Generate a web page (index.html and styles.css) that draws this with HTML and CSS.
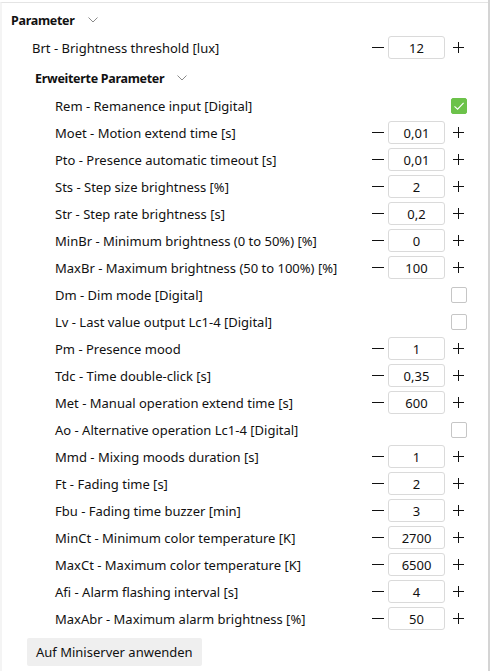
FILE: index.html
```html
<!DOCTYPE html>
<html>
<head>
<meta charset="utf-8">
<link rel="stylesheet" href="styles.css">
</head>
<body>
<div class="frame">
  <div class="panel">
    <div class="section-head top">
      <span class="title">Parameter</span>
      <svg class="chev" width="10" height="6" viewBox="0 0 10 6"><path d="M0.5 0.5 L5 5 L9.5 0.5" fill="none" stroke="#8a8a8a" stroke-width="1"/></svg>
    </div>
    <div class="row lvl1">
      <span class="label">Brt - Brightness threshold [lux]</span>
      <div class="stepper"><span class="minus"></span><span class="box">12</span><span class="plus"></span></div>
    </div>
    <div class="section-head sub">
      <span class="title">Erweiterte Parameter</span>
      <svg class="chev" width="10" height="6" viewBox="0 0 10 6"><path d="M0.5 0.5 L5 5 L9.5 0.5" fill="none" stroke="#8a8a8a" stroke-width="1"/></svg>
    </div>
    <div class="row lvl2">
      <span class="label">Rem - Remanence input [Digital]</span>
      <div class="ctrl"><span class="check on"><svg width="16" height="16" viewBox="0 0 16 16"><path d="M3.5 8.3 L6.6 11.2 L12.6 4.8" fill="none" stroke="#fff" stroke-width="1.1"/></svg></span></div>
    </div>
    <div class="row lvl2"><span class="label">Moet - Motion extend time [s]</span><div class="stepper"><span class="minus"></span><span class="box">0,01</span><span class="plus"></span></div></div>
    <div class="row lvl2"><span class="label">Pto - Presence automatic timeout [s]</span><div class="stepper"><span class="minus"></span><span class="box">0,01</span><span class="plus"></span></div></div>
    <div class="row lvl2"><span class="label">Sts - Step size brightness [%]</span><div class="stepper"><span class="minus"></span><span class="box">2</span><span class="plus"></span></div></div>
    <div class="row lvl2"><span class="label">Str - Step rate brightness [s]</span><div class="stepper"><span class="minus"></span><span class="box">0,2</span><span class="plus"></span></div></div>
    <div class="row lvl2"><span class="label">MinBr - Minimum brightness (0 to 50%) [%]</span><div class="stepper"><span class="minus"></span><span class="box">0</span><span class="plus"></span></div></div>
    <div class="row lvl2"><span class="label">MaxBr - Maximum brightness (50 to 100%) [%]</span><div class="stepper"><span class="minus"></span><span class="box">100</span><span class="plus"></span></div></div>
    <div class="row lvl2"><span class="label">Dm - Dim mode [Digital]</span><div class="ctrl"><span class="check"></span></div></div>
    <div class="row lvl2"><span class="label">Lv - Last value output Lc1-4 [Digital]</span><div class="ctrl"><span class="check"></span></div></div>
    <div class="row lvl2"><span class="label">Pm - Presence mood</span><div class="stepper"><span class="minus"></span><span class="box">1</span><span class="plus"></span></div></div>
    <div class="row lvl2"><span class="label">Tdc - Time double-click [s]</span><div class="stepper"><span class="minus"></span><span class="box">0,35</span><span class="plus"></span></div></div>
    <div class="row lvl2"><span class="label">Met - Manual operation extend time [s]</span><div class="stepper"><span class="minus"></span><span class="box">600</span><span class="plus"></span></div></div>
    <div class="row lvl2"><span class="label">Ao - Alternative operation Lc1-4 [Digital]</span><div class="ctrl"><span class="check"></span></div></div>
    <div class="row lvl2"><span class="label">Mmd - Mixing moods duration [s]</span><div class="stepper"><span class="minus"></span><span class="box">1</span><span class="plus"></span></div></div>
    <div class="row lvl2"><span class="label">Ft - Fading time [s]</span><div class="stepper"><span class="minus"></span><span class="box">2</span><span class="plus"></span></div></div>
    <div class="row lvl2"><span class="label">Fbu - Fading time buzzer [min]</span><div class="stepper"><span class="minus"></span><span class="box">3</span><span class="plus"></span></div></div>
    <div class="row lvl2"><span class="label">MinCt - Minimum color temperature [K]</span><div class="stepper"><span class="minus"></span><span class="box">2700</span><span class="plus"></span></div></div>
    <div class="row lvl2"><span class="label">MaxCt - Maximum color temperature [K]</span><div class="stepper"><span class="minus"></span><span class="box">6500</span><span class="plus"></span></div></div>
    <div class="row lvl2"><span class="label">Afi - Alarm flashing interval [s]</span><div class="stepper"><span class="minus"></span><span class="box">4</span><span class="plus"></span></div></div>
    <div class="row lvl2"><span class="label">MaxAbr - Maximum alarm brightness [%]</span><div class="stepper"><span class="minus"></span><span class="box">50</span><span class="plus"></span></div></div>
    <div class="actions"><button class="apply">Auf Miniserver anwenden</button></div>
  </div>
  <div class="scrollbar"></div>
</div>
</body>
</html>
```
FILE: styles.css
```css
*, *::before, *::after {
  box-sizing: border-box;
}
html, body {
  margin: 0;
  padding: 0;
  background: #ffffff;
}
body {
  font-family: "Noto Sans", "Open Sans", sans-serif;
  font-size: 13px;
  color: #111;
}
.frame {
  display: flex;
  height: 671px;
  overflow: hidden;
}
.panel {
  flex: 1;
  margin-top: 2px;
  border-top: 1px solid #e4e4e4;
  border-left: 2px solid #f4f4f4;
  padding-right: 21px;
}
.scrollbar {
  width: 2px;
  background: #d4d4d4;
}
.section-head {
  display: flex;
  align-items: center;
  gap: 13px;
  height: 31px;
  padding-top: 3px;
}
.section-head .title {
  font-weight: 700;
  font-size: 12.5px;
  letter-spacing: -0.3px;
}
.section-head.top {
  padding-left: 9px;
}
.section-head.sub {
  padding-left: 33px;
}
.row {
  display: flex;
  align-items: center;
  justify-content: space-between;
  height: 27px;
}
.row.lvl1 {
  padding-left: 30px;
}
.row.lvl2 {
  padding-left: 53px;
}
.stepper, .ctrl {
  display: flex;
  align-items: center;
  justify-content: flex-end;
  width: 97px;
}
.minus, .plus {
  position: relative;
  width: 16px;
  height: 16px;
}
.minus::before, .plus::before, .plus::after {
  content: "";
  position: absolute;
  background: #111;
}
.minus::before {
  left: 2px;
  width: 12px;
  top: 7.5px;
  height: 1.2px;
}
.plus::before {
  left: 2px;
  width: 11px;
  top: 7.5px;
  height: 1.2px;
}
.plus::after {
  left: 7px;
  width: 1.2px;
  top: 2px;
  height: 11px;
}
.box {
  width: 58px;
  height: 23px;
  margin: 0 6px 0 2px;
  border: 1px solid #dadada;
  border-radius: 3px;
  display: flex;
  align-items: center;
  justify-content: center;
}
.check {
  width: 16px;
  height: 16px;
  border: 1px solid #c6c6c6;
  border-radius: 2px;
  display: block;
}
.check.on {
  border-color: #6cc24a;
  background: #6cc24a;
  position: relative;
}
.check.on svg {
  position: absolute;
  left: -1px;
  top: -1px;
}
.actions {
  padding: 6px 0 0 25px;
}
.apply {
  font: inherit;
  color: #111;
  background: #efefef;
  border: none;
  border-radius: 2px;
  height: 28px;
  padding: 0 9px;
}
```
